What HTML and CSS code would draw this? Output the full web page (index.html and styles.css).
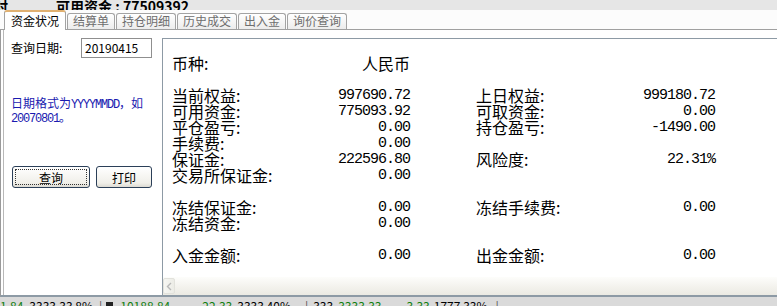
FILE: index.html
```html
<!DOCTYPE html>
<html lang="zh-CN">
<head>
<meta charset="utf-8">
<title>资金状况</title>
<link rel="stylesheet" href="styles.css">
</head>
<body>
<div class="titlebar"><span class="t1">时</span><span class="t2">可用资金 : 77509392</span></div>
<div class="tabbar">
  <div class="tab active">资金状况</div>
  <div class="tab">结算单</div>
  <div class="tab">持仓明细</div>
  <div class="tab">历史成交</div>
  <div class="tab">出入金</div>
  <div class="tab">询价查询</div>
</div>
<div class="main">
  <div class="left">
    <div class="daterow">
      <span class="dlabel">查询日期:</span>
      <div class="dinput">20190415</div>
    </div>
    <p class="note">日期格式为<span class="half">YYYYMMDD</span>，如<br><span class="half">20070801</span>。</p>
    <div class="btns">
      <button class="btn wide"><span class="focus">查询</span></button>
      <button class="btn narrow">打印</button>
    </div>
  </div>
  <div class="right">
    <div class="grid">
      <div>币种:</div><div class="val">人民币</div><div></div><div></div><div></div>
      <div class="blank"></div>
      <div>当前权益:</div><div class="num">997690.72</div><div></div><div>上日权益:</div><div class="num">999180.72</div>
      <div>可用资金:</div><div class="num">775093.92</div><div></div><div>可取资金:</div><div class="num">0.00</div>
      <div>平仓盈亏:</div><div class="num">0.00</div><div></div><div>持仓盈亏:</div><div class="num">-1490.00</div>
      <div>手续费:</div><div class="num">0.00</div><div></div><div></div><div></div>
      <div>保证金:</div><div class="num">222596.80</div><div></div><div>风险度:</div><div class="num">22.31%</div>
      <div class="wide-label">交易所保证金:</div><div class="num">0.00</div><div></div><div></div><div></div>
      <div class="blank"></div>
      <div>冻结保证金:</div><div class="num">0.00</div><div></div><div>冻结手续费:</div><div class="num">0.00</div>
      <div>冻结资金:</div><div class="num">0.00</div><div></div><div></div><div></div>
      <div class="blank"></div>
      <div>入金金额:</div><div class="num">0.00</div><div></div><div>出金金额:</div><div class="num">0.00</div>
    </div>
    <div class="scroll">
      <div class="sbtn"><svg width="6" height="9" viewBox="0 0 6 9"><path d="M5 1 L1.5 4.5 L5 8" fill="none" stroke="#b8b8b8" stroke-width="1.4"/></svg></div>
    </div>
  </div>
</div>
<div class="status"><span class="g s1">1.84</span><span class="s2">3333.33 8%</span><span class="sep">|</span><span class="ico"></span><span class="g s3">10188.84</span><span class="g s4">22.33</span><span class="s5">3333 40%</span><span class="sep s6">|</span><span class="s7">333</span><span class="g s8">3333.33</span><span class="g s9">3.33</span><span class="s10">1777 33%</span><span class="sep s11">|</span></div>
</body>
</html>
```
FILE: styles.css
```css
* { box-sizing: border-box; }
html, body { margin: 0; padding: 0; }
body {
  width: 777px;
  height: 306px;
  overflow: hidden;
  background: #fff;
  font-family: "Noto Sans CJK SC", "Liberation Sans", sans-serif;
  font-size: 12px;
  color: #000;
  display: flex;
  flex-direction: column;
}

.titlebar {
  height: 10px;
  flex: none;
  background: #e6e6e6;
  overflow: hidden;
  display: flex;
  align-items: flex-end;
  font-weight: bold;
  font-size: 14px;
  line-height: 14px;
  white-space: pre;
}
.titlebar .t1 { width: 62px; margin-left: -6px; margin-bottom: -3px; }
.titlebar .t2 { margin-bottom: -3px; }

.tabbar {
  height: 20px;
  flex: none;
  background: #fcfcfc;
  display: flex;
  align-items: flex-end;
  padding-left: 4px;
  border-bottom: 1px solid #a0a0a0;
}
.tab {
  height: 16px;
  padding: 0 5px;
  margin-right: 1px;
  border: 1px solid #a3a3a3;
  border-bottom: none;
  border-radius: 3px 3px 0 0;
  background: linear-gradient(#ffffff, #ececec);
  color: #6e6e6e;
  font-size: 12px;
  line-height: 14px;
  white-space: nowrap;
}
.tab.active {
  height: 20px;
  margin-bottom: -1px;
  padding: 0 6px;
  background: #fff;
  color: #000;
  border-top: 2px solid #e0b070;
  line-height: 17px;
}

.main {
  flex: 1;
  display: flex;
  border-left: 1px solid #9a9a9a;
  border-bottom: 2px solid #8d9aa5;
  padding-left: 2px;
}

.left {
  width: 159px;
  flex: none;
  border-left: 1px solid #b8b8b8;
  padding: 8px 0 0 7px;
  display: flex;
  flex-direction: column;
}
.daterow {
  display: flex;
  align-items: center;
  height: 20px;
}
.dlabel { width: 70px; font-size: 12px; line-height: 12px; }
.dinput {
  width: 71px;
  height: 20px;
  border: 1px solid #8f8f8f;
  padding-left: 3px;
  font-size: 12px;
  line-height: 17px;
}
.note {
  margin: 39px 0 0 0;
  color: #1a1ab0;
  font-size: 12px;
  line-height: 11px;
}
.half {
  font-family: "Liberation Mono", monospace;
  letter-spacing: -1.2px;
}
.btns {
  display: flex;
  gap: 6px;
  margin-top: 41px;
  padding-left: 1px;
}
.btn {
  height: 22px;
  border: 1px solid #2b3f58;
  border-radius: 3px;
  background: linear-gradient(#ffffff, #f0efe9 80%, #dcdad2);
  font-family: "Noto Sans CJK SC", sans-serif;
  font-size: 12px;
  color: #000;
  padding: 2px;
  display: flex;
  align-items: stretch;
  justify-content: center;
}
.btn.wide { width: 78px; }
.btn.narrow { width: 56px; align-items: center; }
.focus {
  flex: 1;
  border: 1px dotted #333;
  display: flex;
  align-items: center;
  justify-content: center;
}

.right {
  flex: 1;
  margin-top: 8px;
  border-top: 1px solid #8d9aa5;
  border-left: 1px solid #8d9aa5;
  display: flex;
  flex-direction: column;
}
.grid {
  flex: 1;
  padding: 16px 0 0 9px;
  display: grid;
  grid-template-columns: 150px 88px 66px 150px 89px;
  grid-auto-rows: 16px;
  align-content: start;
  font-size: 16px;
  line-height: 16px;
  white-space: nowrap;
}
.blank { grid-column: 1 / -1; }
.val { text-align: right; }
.num {
  text-align: right;
  font-family: "Liberation Mono", monospace;
  font-size: 15px;
  letter-spacing: -1px;
  line-height: 17px;
}

.scroll {
  height: 18px;
  flex: none;
  background: linear-gradient(#fdfdfb, #f4f3ee 50%, #ebeae3);
  display: flex;
  padding: 1px 0 0 0;
}
.sbtn {
  width: 12px;
  height: 16px;
  border: 1px solid #e2e2dc;
  border-radius: 2px;
  background: linear-gradient(90deg, #f7f7f3, #ececE6);
  display: flex;
  align-items: center;
  justify-content: center;
}

.status {
  height: 9px;
  flex: none;
  background: #dadada;
  overflow: hidden;
  display: flex;
  align-items: flex-start;
  font-family: "Noto Sans CJK SC", sans-serif;
  font-size: 12px;
  line-height: 12px;
  white-space: pre;
  padding-top: 3px;
}
.g { color: #108010; }
.sep { color: #555; }
.s1 { margin-left: 0; }
.s2 { margin-left: 6px; }
.status > .sep { margin-left: 6px; }
.ico { width: 7px; height: 8px; background: #222; margin: 2px 0 0 4px; }
.s3 { margin-left: 7px; }
.s4 { margin-left: 32px; }
.s5 { margin-left: 5px; }
.status > .s6 { margin-left: 14px; }
.s7 { margin-left: 5px; }
.s8 { margin-left: 5px; }
.s9 { margin-left: 25px; }
.s10 { margin-left: 4px; }
.status > .s11 { margin-left: 8px; }
```
